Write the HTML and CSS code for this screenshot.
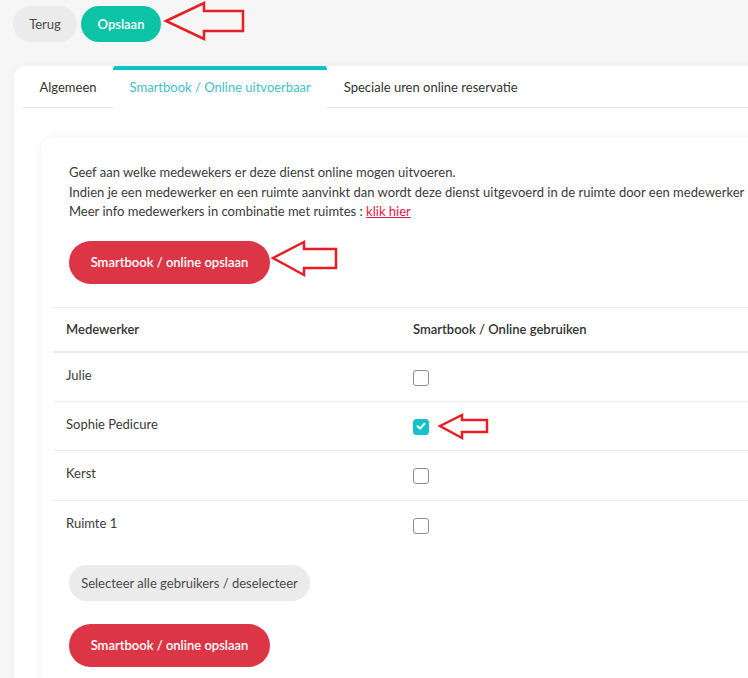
FILE: index.html
```html
<!DOCTYPE html>
<html lang="nl">
<head>
<meta charset="utf-8">
<title>Smartbook / Online uitvoerbaar</title>
<link rel="stylesheet" href="styles.css">
</head>
<body>
<div class="page">
  <div class="toolbar">
    <button class="btn btn-grey btn-back">Terug</button>
    <button class="btn btn-teal">Opslaan</button>
  </div>

  <div class="panel">
    <ul class="tabs">
      <li class="tab">Algemeen</li>
      <li class="tab active">Smartbook / Online uitvoerbaar</li>
      <li class="tab">Speciale uren online reservatie</li>
      <li class="tab-fill"></li>
    </ul>
    <div class="tab-body">
      <div class="card">
        <p class="intro">Geef aan welke medewekers er deze dienst online mogen uitvoeren.<br>Indien je een medewerker en een ruimte aanvinkt dan wordt deze dienst uitgevoerd in de ruimte door een medewerker<br>Meer info medewerkers in combinatie met ruimtes : <a class="link" href="#">klik hier</a></p>
        <button class="btn btn-red">Smartbook / online opslaan</button>
        <table class="staff">
          <thead>
            <tr><th class="col-name">Medewerker</th><th>Smartbook / Online gebruiken</th></tr>
          </thead>
          <tbody>
            <tr><td>Julie</td><td><span class="check"></span></td></tr>
            <tr><td>Sophie Pedicure</td><td><span class="check checked"><svg viewBox="0 0 16 16" width="16" height="16"><polyline points="4.5,8.3 7,10.6 11.5,5.8" fill="none" stroke="#fff" stroke-width="2" stroke-linecap="round" stroke-linejoin="round"/></svg></span></td></tr>
            <tr><td>Kerst</td><td><span class="check"></span></td></tr>
            <tr><td>Ruimte 1</td><td><span class="check"></span></td></tr>
          </tbody>
        </table>
        <div class="actions">
          <button class="btn btn-grey btn-wide">Selecteer alle gebruikers / deselecteer</button>
          <button class="btn btn-red">Smartbook / online opslaan</button>
        </div>
      </div>
    </div>
  </div>

  <svg class="arrows" width="748" height="678" viewBox="0 0 748 678">
    <polygon points="166,21 204,3 204,11 243,11 243,31 204,31 204,39" />
    <polygon points="273,258 304,242 304,249 336,249 336,268 304,268 304,275" />
    <polygon points="440,426 462,415 462,420 487,420 487,432 462,432 462,438" />
  </svg>
</div>
</body>
</html>
```

FILE: styles.css
```css
* { box-sizing: border-box; }

html, body {
  margin: 0;
  padding: 0;
  background: #f6f6f6;
  overflow: hidden;
}

body {
  font-family: "Lato", "Noto Sans", sans-serif;
  font-size: 13px;
  color: #3a3a3a;
}

.page {
  position: relative;
  width: 748px;
  height: 678px;
  padding: 6px 0 0 13px;
}

.toolbar {
  display: flex;
  gap: 4px;
  height: 36px;
}

.btn {
  font-family: inherit;
  font-size: 13px;
  border: none;
  border-radius: 22px;
  cursor: pointer;
  padding: 0;
}

.btn-grey {
  background: #ebebeb;
  color: #4a4a4a;
  height: 36px;
}

.btn-back { width: 64px; }

.btn-teal {
  background: #0cc4a5;
  color: #fff;
  font-weight: 600;
  height: 36px;
  width: 80px;
}

.btn-red {
  background: #dc3546;
  color: #fff;
  font-weight: 600;
  height: 43px;
  width: 201px;
}

.btn-wide {
  width: 241px;
}

.panel {
  margin: 24px -40px 0 1px;
  background: #fff;
  border-radius: 12px 0 0 0;
  box-shadow: 0 0 6px rgba(0,0,0,0.04);
  height: 640px;
}

.tabs {
  list-style: none;
  margin: 0;
  padding: 0 0 0 9px;
  display: flex;
  height: 42px;
}

.tab {
  padding: 0 16.5px;
  display: flex;
  align-items: center;
  color: #333;
  border-bottom: 1px solid #e1e1e6;
}

.tab.active {
  color: #3fbfc7;
  border-top: 4px solid #0cc3c4;
  border-radius: 3px 3px 0 0;
  border-bottom: 1px solid transparent;
  padding-bottom: 4px;
}

.tab-fill {
  flex: 1;
  border-bottom: 1px solid #e1e1e6;
}

.tab-body {
  padding: 29px 0 0 27px;
}

.card {
  background: #fff;
  border-radius: 12px 0 0 0;
  box-shadow: 0 0 10px rgba(0,0,0,0.06);
  padding: 26px 0 30px 28px;
}

.intro {
  margin: 0;
  line-height: 19.5px;
  color: #3a3a3a;
  white-space: nowrap;
}

.link {
  color: #e3164b;
  text-decoration: underline;
}

.card > .btn-red {
  margin-top: 19px;
}

.staff {
  margin: 23px 0 0 -15px;
  width: 760px;
  border-collapse: collapse;
}

.staff th,
.staff td {
  text-align: left;
  padding: 12px 12px;
  line-height: 20px;
  vertical-align: top;
}

.staff th {
  font-weight: 600;
  color: #333;
  border-top: 1px solid #ececec;
  border-bottom: 2px solid #ececec;
  padding-top: 11px;
  padding-bottom: 12px;
}

.staff .col-name { width: 347px; }

.staff tbody td {
  height: 49.5px;
  padding-top: 12px;
  padding-bottom: 11px;
}

.staff tbody tr + tr td {
  border-top: 1px solid #ececec;
}

.check {
  display: block;
  width: 16px;
  height: 16px;
  margin-top: 5px;
  border: 1.5px solid #8e8e8e;
  border-radius: 3px;
  background: #fff;
}

.check.checked {
  background: #15c2c9;
  border-color: #15c2c9;
  position: relative;
}

.check.checked svg {
  position: absolute;
  left: -1.5px;
  top: -1.5px;
}

.actions {
  display: flex;
  flex-direction: column;
  align-items: flex-start;
  gap: 23px;
  margin-top: 15px;
}

.arrows {
  position: absolute;
  left: 0;
  top: 0;
  pointer-events: none;
}

.arrows polygon {
  fill: none;
  stroke: #ea1c24;
  stroke-width: 2.5;
}
```
